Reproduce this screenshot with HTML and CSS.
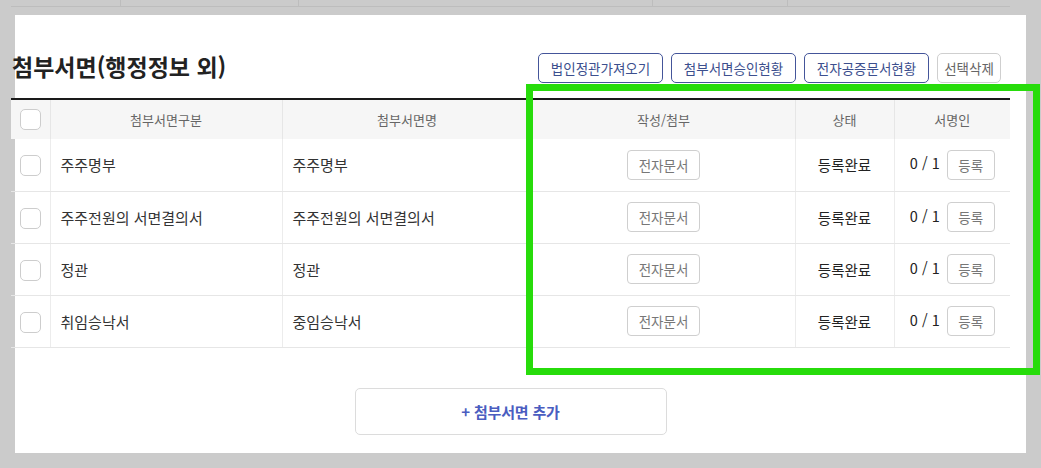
FILE: index.html
```html
<!DOCTYPE html>
<html lang="ko">
<head>
<meta charset="utf-8">
<link rel="stylesheet" href="styles.css">
</head>
<body>
<div class="topstrip">
  <div class="topgrid">
    <div class="tc w1"></div><div class="tc w2"></div><div class="tc w3"></div><div class="tc w4"></div><div class="tc w5"></div>
  </div>
</div>
<div class="panel">
  <div class="content">
    <div class="toolbar">
      <h2 class="title">첨부서면(행정정보 외)</h2>
      <div class="actions">
        <button class="btn btn-blue">법인정관가져오기</button>
        <button class="btn btn-blue">첨부서면승인현황</button>
        <button class="btn btn-blue">전자공증문서현황</button>
        <button class="btn btn-gray">선택삭제</button>
      </div>
    </div>
    <table class="grid">
      <colgroup>
        <col class="c1"><col class="c2"><col class="c3"><col class="c4"><col class="c5"><col class="c6">
      </colgroup>
      <thead>
        <tr>
          <th><span class="chk"></span></th>
          <th>첨부서면구분</th>
          <th>첨부서면명</th>
          <th>작성/첨부</th>
          <th>상태</th>
          <th>서명인</th>
        </tr>
      </thead>
      <tbody>
        <tr>
          <td class="cc"><span class="chk"></span></td>
          <td class="tl">주주명부</td>
          <td class="tl">주주명부</td>
          <td class="cc"><button class="sbtn">전자문서</button></td>
          <td class="cc st">등록완료</td>
          <td class="cc"><div class="sign"><span class="cnt">0 / 1</span><button class="sbtn reg">등록</button></div></td>
        </tr>
        <tr>
          <td class="cc"><span class="chk"></span></td>
          <td class="tl">주주전원의 서면결의서</td>
          <td class="tl">주주전원의 서면결의서</td>
          <td class="cc"><button class="sbtn">전자문서</button></td>
          <td class="cc st">등록완료</td>
          <td class="cc"><div class="sign"><span class="cnt">0 / 1</span><button class="sbtn reg">등록</button></div></td>
        </tr>
        <tr>
          <td class="cc"><span class="chk"></span></td>
          <td class="tl">정관</td>
          <td class="tl">정관</td>
          <td class="cc"><button class="sbtn">전자문서</button></td>
          <td class="cc st">등록완료</td>
          <td class="cc"><div class="sign"><span class="cnt">0 / 1</span><button class="sbtn reg">등록</button></div></td>
        </tr>
        <tr>
          <td class="cc"><span class="chk"></span></td>
          <td class="tl">취임승낙서</td>
          <td class="tl">중임승낙서</td>
          <td class="cc"><button class="sbtn">전자문서</button></td>
          <td class="cc st">등록완료</td>
          <td class="cc"><div class="sign"><span class="cnt">0 / 1</span><button class="sbtn reg">등록</button></div></td>
        </tr>
      </tbody>
    </table>
    <div class="addwrap">
      <button class="addbtn">+ 첨부서면 추가</button>
    </div>
  </div>
</div>
<div class="highlight"></div>
</body>
</html>
```

FILE: styles.css
```css
* { box-sizing: border-box; }
html, body { margin: 0; padding: 0; }
body {
  background: #cbcbcb;
  font-family: "Noto Sans CJK KR", "Noto Sans", sans-serif;
  width: 1041px;
  height: 468px;
  overflow: hidden;
  position: relative;
}
.topstrip { height: 15px; }
.topgrid {
  display: flex;
  margin-left: 11px;
  width: 999px;
  height: 7px;
  border-bottom: 1px solid #bdbdbd;
}
.tc { border-right: 1px solid #bdbdbd; height: 100%; }
.tc.w1 { width: 110px; }
.tc.w2 { width: 178px; }
.tc.w3 { width: 354px; }
.tc.w4 { width: 135px; }
.tc.w5 { flex: 1; border-right: none; }

.panel {
  margin-left: 15px;
  width: 1011px;
  height: 438px;
  background: #fff;
}
.content {
  margin-left: -4px;
  width: 999px;
  padding-top: 38px;
}
.toolbar {
  display: flex;
  align-items: center;
  justify-content: space-between;
  height: 30px;
}
.title {
  margin: 0 0 0 1px;
  font-size: 23px;
  font-weight: 700;
  color: #222;
  letter-spacing: 0;
  line-height: 30px;
  position: relative;
  top: -2px;
}
.actions { display: flex; gap: 8px; margin-right: 9px; }
.btn {
  height: 30px;
  width: 125px;
  padding: 0;
  border-radius: 5px;
  background: #fff;
  font-family: inherit;
  font-size: 13.5px;
  line-height: 28px;
  text-align: center;
}
.btn-blue { border: 1px solid #44559a; color: #3c4f8e; }
.btn-gray { border: 1px solid #cfcfcf; color: #666; width: 64px; }

.grid {
  margin-top: 15px;
  width: 999px;
  border-collapse: collapse;
  table-layout: fixed;
  border-top: 2px solid #1a1a1a;
}
.c1 { width: 39px; }
.c2 { width: 232px; }
.c3 { width: 250px; }
.c4 { width: 263px; }
.c5 { width: 99px; }
.c6 { width: 116px; }
th {
  height: 40px;
  background: #f6f6f6;
  font-weight: 400;
  font-size: 13px;
  color: #666;
  padding: 0;
  border-left: 1px solid #e6e6e6;
  vertical-align: middle;
}
th:first-child, td:first-child { border-left: none; }
td {
  height: 52px;
  padding: 0;
  border-left: 1px solid #ececec;
  border-bottom: 1px solid #e6e6e6;
  font-size: 15px;
  color: #333;
  vertical-align: middle;
}
.tl { padding-left: 10px; }
.cc { text-align: center; }
.st { color: #222; font-size: 14.5px; }
.chk {
  display: inline-block;
  width: 21px;
  height: 21px;
  border: 1px solid #cdcdcd;
  border-radius: 5px;
  background: #fff;
  vertical-align: middle;
}
.sbtn {
  height: 30px;
  width: 73px;
  border: 1px solid #cfcfcf;
  border-radius: 4px;
  background: #fff;
  font-family: inherit;
  font-size: 13.5px;
  color: #777;
  padding: 0;
  line-height: 28px;
}
.sbtn.reg { width: 48px; }
.sign {
  display: flex;
  align-items: center;
  justify-content: center;
  gap: 7px;
}
.cnt { font-size: 14.5px; color: #222; position: relative; top: -2px; }

.addwrap {
  display: flex;
  justify-content: center;
  margin-top: 40px;
}
.addbtn {
  width: 312px;
  height: 47px;
  border: 1px solid #dcdcdc;
  border-radius: 5px;
  background: #fff;
  font-family: inherit;
  font-size: 15px;
  font-weight: 700;
  color: #4a5dc0;
  letter-spacing: -0.2px;
}

.highlight {
  position: absolute;
  left: 526px;
  top: 84px;
  width: 514px;
  height: 291px;
  border: 7px solid #27dc0b;
}
```
